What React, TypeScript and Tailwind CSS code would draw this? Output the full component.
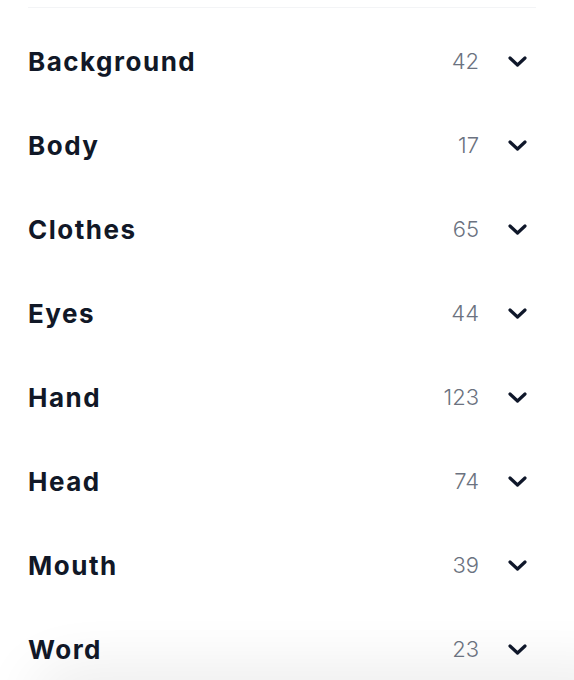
const traits = [
  { name: "Background", count: 42 },
  { name: "Body", count: 17 },
  { name: "Clothes", count: 65 },
  { name: "Eyes", count: 44 },
  { name: "Hand", count: 123 },
  { name: "Head", count: 74 },
  { name: "Mouth", count: 39 },
  { name: "Word", count: 23 },
];

function Chevron() {
  return (
    <svg width="19" height="11" viewBox="0 0 19 11" fill="none" className="ml-[29px] mr-[9px] text-[#0f172a]">
      <path d="M2 2 L9.5 9 L17 2" stroke="currentColor" strokeWidth="3.2" strokeLinecap="round" strokeLinejoin="round" />
    </svg>
  );
}

export default function App() {
  return (
    <div className="relative h-[680px] w-full overflow-hidden bg-white">
      {/* shadow of the bar below the fold */}
      <div className="pointer-events-none absolute -bottom-[30px] left-[40px] -right-[40px] h-[30px] rounded-tl-[60px] bg-white shadow-[0_0_60px_10px_rgba(0,0,0,0.09)]" />
      <div className="relative mx-[28px] mt-[7px] w-[508px] border-t border-gray-100 pt-[11px]">
        {traits.map((t) => (
          <button
            key={t.name}
            className="flex h-[84px] w-full items-center justify-between text-left"
          >
            <span className="font-['Inter',sans-serif] text-[26px] font-bold tracking-[0.058em] text-[#111827]">
              {t.name}
            </span>
            <span className="flex items-center">
              <span className="font-['Inter',sans-serif] text-[22px] font-light text-[#6b7280]">
                {t.count}
              </span>
              <Chevron />
            </span>
          </button>
        ))}
      </div>
    </div>
  );
}
